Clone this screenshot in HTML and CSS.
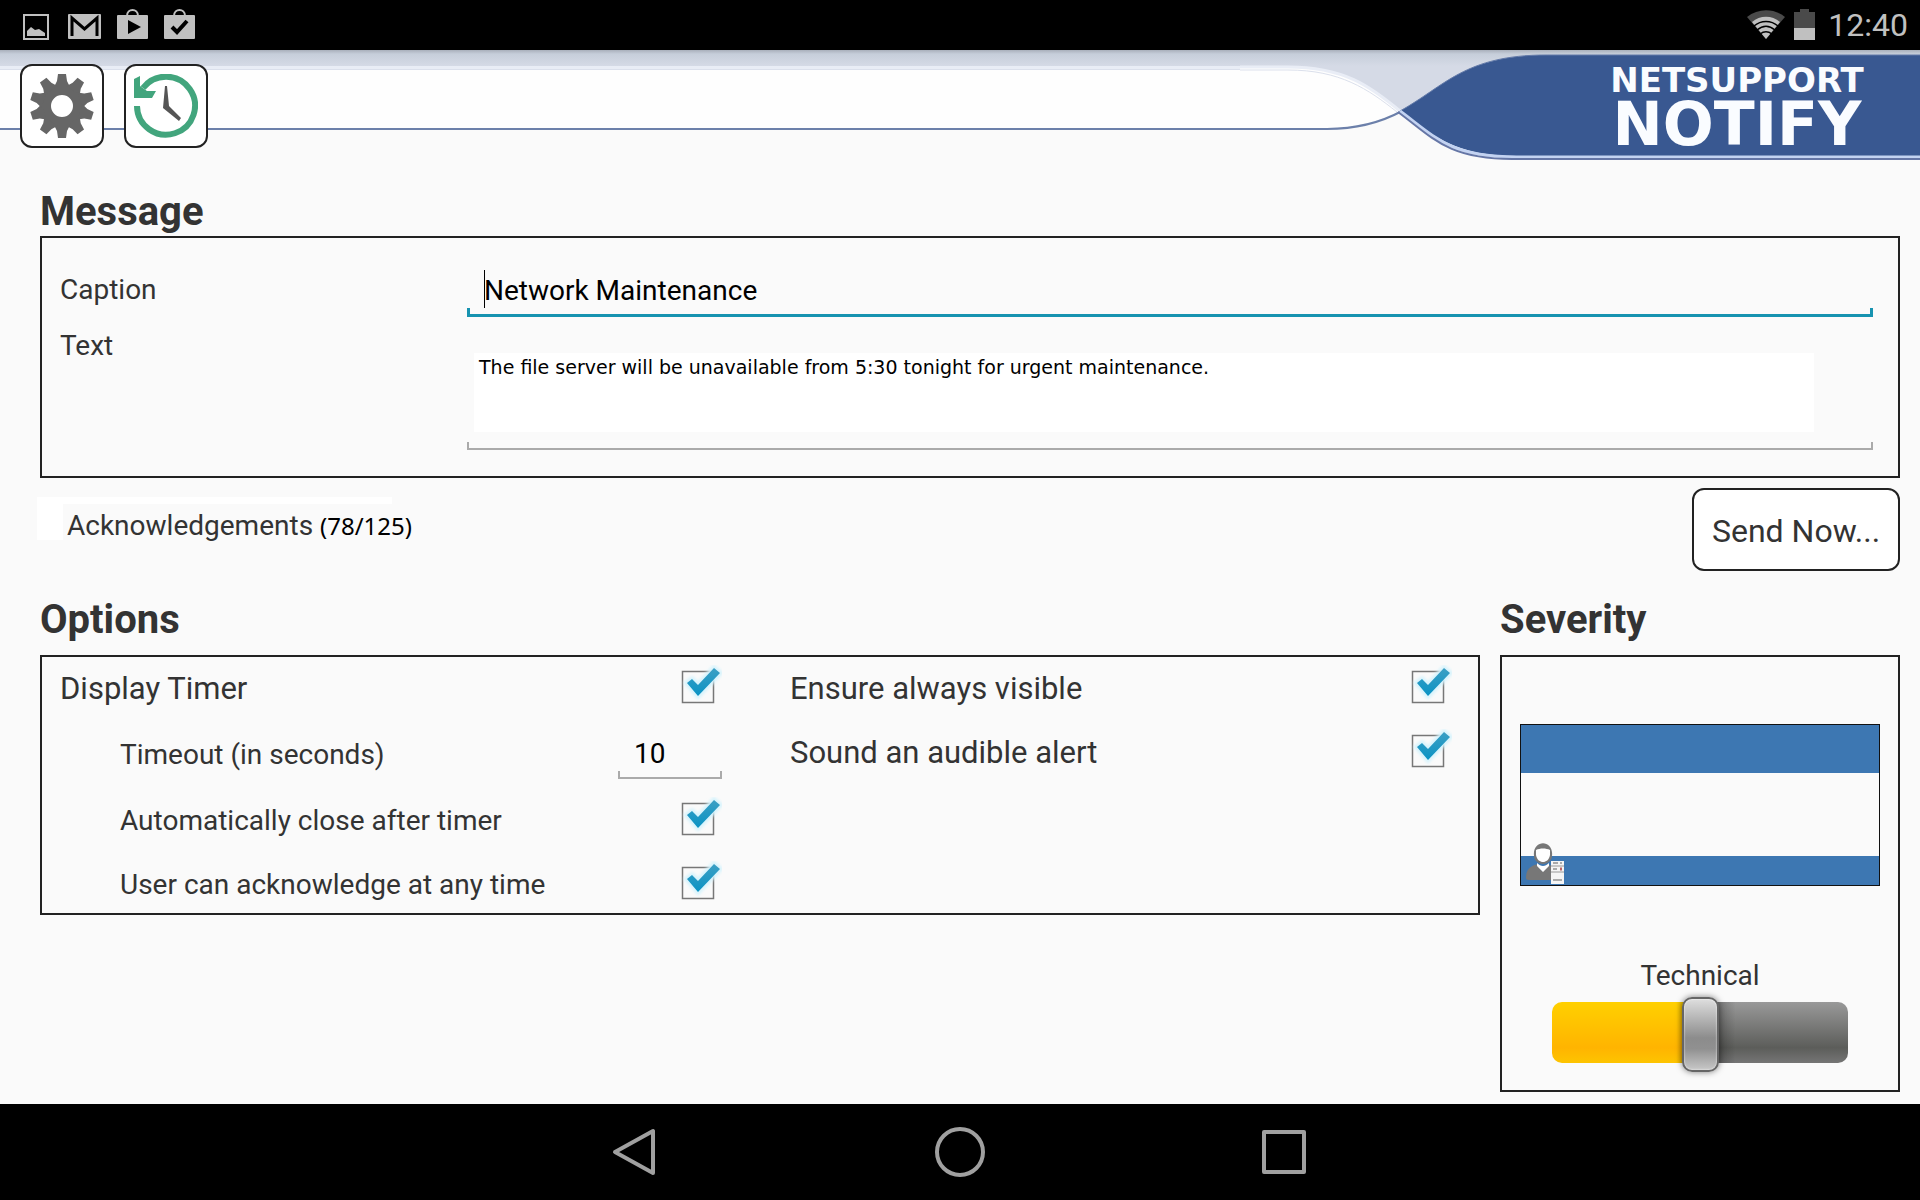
FILE: index.html
```html
<!DOCTYPE html>
<html lang="en">

<head>
    <meta charset="UTF-8">
    <meta name="viewport" content="width=device-width, initial-scale=1.0">
    <title>NetSupport Notify</title>
    <link rel="stylesheet" href="styles.css">
</head>

<body>
    <!-- Status Bar -->
    <div class="status-bar">
        <div class="status-left">
            <svg width="26" height="26" viewBox="0 0 26 26">
                <rect x="1" y="1" width="24" height="24" fill="none" stroke="#c0c0c0" stroke-width="2" />
                <path d="M4 22V17L8 13L12 16L16 15L22 19V22Z" fill="#c0c0c0" />
            </svg>
            <svg width="34" height="26" viewBox="0 0 34 26">
                <rect x="0" y="0" width="33" height="25" rx="1" fill="#c0c0c0" />
                <path d="M4 22V4L16.500 15L29 4V22" fill="none" stroke="#000" stroke-width="3" />
            </svg>
            <svg width="32" height="32" viewBox="0 0 32 32">
                <path d="M10 8C10 0 21 0 21 8" fill="none" stroke="#c0c0c0" stroke-width="2" />
                <rect x="0" y="7" width="31" height="24" rx="1" fill="#c0c0c0" />
                <path d="M11 12L24 19L11 26Z" fill="#000" />
            </svg>
            <svg width="32" height="32" viewBox="0 0 32 32">
                <path d="M10 8C10 0 21 0 21 8" fill="none" stroke="#c0c0c0" stroke-width="2" />
                <rect x="0" y="7" width="31" height="24" rx="1" fill="#c0c0c0" />
                <path d="M8 19L13 24L23 13" fill="none" stroke="#000" stroke-width="4" />
            </svg>
        </div>
        <div class="status-right">
            <svg width="38" height="30" viewBox="0 0 38 30">
                <path d="M19 29L0 7C11 -2 27 -2 38 7Z" fill="#4a4a4a" />
                <path d="M19 29L5 12C13 5 25 5 33 12Z" fill="#c0c0c0" />
                <path d="M7 16C14 10 24 10 31 16M10 20C16 15 22 15 28 20M13 24C17 21 21 21 25 24" fill="none" stroke="#000" stroke-width="1.500" />
            </svg>
            <svg width="22" height="32" viewBox="0 0 22 32">
                <path d="M6 0H15V3H21V19H0V3H6Z" fill="#4a4a4a" />
                <rect x="0" y="19" width="21" height="12" fill="#c0c0c0" />
            </svg>
            <span class="clock">12:40</span>
        </div>
    </div>

    <!-- Header -->
    <header class="header">
        <svg class="swoosh" width="680" height="110" viewBox="0 0 680 110">
            <defs>
                <linearGradient id="band" gradientUnits="userSpaceOnUse" x1="0" y1="0" x2="0" y2="16">
                    <stop offset="0" stop-color="#a9b0bb" />
                    <stop offset="0.250" stop-color="#c6ceda" />
                    <stop offset="1" stop-color="#d5dae6" />
                </linearGradient>
            </defs>
            <rect width="680" height="110" fill="#fafafa" />
            <path d="M0 0H680V40H220L160 62L100 40H0Z" fill="url(#band)" />
            <path d="M0 17H48C104 17 130 36 160 61C138 74 115 79 87 79H0Z" fill="#fefefe" />
            <path d="M0 17H48C104 17 130 36 160 61" fill="none" stroke="#e9edf6" stroke-width="3" />
            <path d="M0 20H48C100 20 128 39 157 62" fill="none" stroke="#dbe0ec" stroke-width="1" />
            <path d="M0 79H87C115 79 138 74 162 61" fill="none" stroke="#6c80aa" stroke-width="2" />
            <path d="M160 61C205 36 225 5 306 5H680V106H278C215 106 195 87 160 61Z" fill="#395891" />
            <path d="M160 61C205 36 225 5 306 5H680" fill="none" stroke="#6279a8" stroke-width="1" />
            <path d="M160 61C195 87 210 107 276 107H680" fill="none" stroke="#c3d3f2" stroke-width="3" />
            <path d="M158 62C193 88 208 109 272 109H680" fill="none" stroke="#6576a6" stroke-width="2" />
        </svg>
        <div class="toolbar">
            <button class="icon-btn" aria-label="Settings">
                <svg width="64" height="64" viewBox="-32 -32 64 64" fill="#666">
                    <defs>
                        <path id="tooth" d="M-4 -32H4L5 -25L8 -19H-8L-5 -25Z" />
                    </defs>
                    <circle r="16.500" fill="none" stroke="#666" stroke-width="11" />
                    <use href="#tooth" />
                    <use href="#tooth" transform="rotate(36)" />
                    <use href="#tooth" transform="rotate(72)" />
                    <use href="#tooth" transform="rotate(108)" />
                    <use href="#tooth" transform="rotate(144)" />
                    <use href="#tooth" transform="rotate(180)" />
                    <use href="#tooth" transform="rotate(216)" />
                    <use href="#tooth" transform="rotate(252)" />
                    <use href="#tooth" transform="rotate(288)" />
                    <use href="#tooth" transform="rotate(324)" />
                </svg>
            </button>
            <button class="icon-btn" aria-label="History">
                <svg width="64" height="64" viewBox="0 0 64 64">
                    <path d="M3 32A29 29 0 1 0 9 14" fill="none" stroke="#42a57d" stroke-width="6" />
                    <path d="M0 24V5L6 2V12L13 17H22L18 24Z" fill="#42a57d" />
                    <path d="M31 12H33L35 32L47 44L45 47L29 34Z" fill="#555" />
                </svg>
            </button>
        </div>
        <div class="logo">
            <span class="logo-top">NETSUPPORT</span>
            <span class="logo-name">NOTIFY</span>
        </div>
    </header>

    <main class="container">
        <!-- Message -->
        <h2 class="section-title">Message</h2>
        <div class="panel message-panel">
            <label class="field-label" for="caption">Caption</label>
            <input class="line-input caption-input" type="text" id="caption" value="Network Maintenance">
            <label class="field-label" for="text">Text</label>
            <div class="text-field">
                <textarea id="text">The file server will be unavailable from 5:30 tonight for urgent maintenance.</textarea>
            </div>
        </div>

        <div class="send-row">
            <div class="acknowledgements">Acknowledgements <span class="ack-count">(78/125)</span></div>
            <button class="send-btn">Send Now...</button>
        </div>

        <div class="columns">
            <!-- Options -->
            <section>
                <h2 class="section-title spaced">Options</h2>
                <div class="panel options-panel">
                    <div class="option-list">
                        <div class="option">
                            <label for="displayTimer">Display Timer</label>
                            <input type="checkbox" id="displayTimer" checked>
                        </div>
                        <div class="option sub tall">
                            <label for="timeout">Timeout (in seconds)</label>
                            <input class="line-input timeout-input" type="text" id="timeout" value="10">
                        </div>
                        <div class="option sub">
                            <label for="autoClose">Automatically close after timer</label>
                            <input type="checkbox" id="autoClose" checked>
                        </div>
                        <div class="option sub">
                            <label for="userAck">User can acknowledge at any time</label>
                            <input type="checkbox" id="userAck" checked>
                        </div>
                    </div>
                    <div class="option-list">
                        <div class="option">
                            <label for="alwaysVisible">Ensure always visible</label>
                            <input type="checkbox" id="alwaysVisible" checked>
                        </div>
                        <div class="option">
                            <label for="audibleAlert">Sound an audible alert</label>
                            <input type="checkbox" id="audibleAlert" checked>
                        </div>
                    </div>
                </div>
            </section>

            <!-- Severity -->
            <section>
                <h2 class="section-title spaced">Severity</h2>
                <div class="panel severity-panel">
                    <div class="preview">
                        <div class="preview-top"></div>
                        <div class="preview-bottom">
                            <svg class="technician" width="40" height="42" viewBox="0 0 40 42">
                                <path d="M1 36C1 27 5 24 13 22L17 29L22 22L27 24V38H6C3 38 1 38 1 36Z" fill="#777" />
                                <path d="M9 14C7 -3 29 -3 27 14C27 18 23 22 18 22C13 22 9 18 9 14Z" fill="#777" />
                                <path d="M11 8C15 6 21 6 25 8V13C24 18 21 20 18 20C15 20 12 18 11 13Z" fill="#fff" />
                                <path d="M12 21C16 25 20 25 24 21L24 24L18 30L12 24Z" fill="#fff" />
                                <rect x="26" y="19" width="13" height="23" fill="#f5f5f5" />
                                <path d="M26 24H39M26 30H39" stroke="#999" stroke-width="1" />
                                <path d="M28 21H33M35 21H37M28 27H32M28 38H37" stroke="#aaa" stroke-width="2" />
                                <path d="M35 27H37" stroke="#b66" stroke-width="3" />
                            </svg>
                        </div>
                    </div>
                    <label class="severity-label" for="severity">Technical</label>
                    <input type="range" id="severity" min="0" max="4" value="2">
                </div>
            </section>
        </div>
    </main>

    <!-- Navigation Bar -->
    <nav class="nav-bar">
        <button class="nav-btn" aria-label="Back">
            <svg width="50" height="50" viewBox="0 0 50 50">
                <path d="M42 4V46L4 25Z" />
            </svg>
        </button>
        <button class="nav-btn" aria-label="Home">
            <svg width="50" height="50" viewBox="0 0 50 50">
                <circle cx="25" cy="25" r="23" />
            </svg>
        </button>
        <button class="nav-btn" aria-label="Recent apps">
            <svg width="50" height="50" viewBox="0 0 50 50">
                <rect x="5" y="5" width="40" height="40" />
            </svg>
        </button>
    </nav>
</body>

</html>
```

FILE: styles.css
```css
/* General Styling */
* {
    box-sizing: border-box;
}

body {
    font-family: 'Roboto', sans-serif;
    font-size: 28px;
    line-height: 38px;
    background-color: #fafafa;
    color: #333;
    margin: 0;
    min-height: 100vh;
    display: flex;
    flex-direction: column;
}

button,
input,
textarea {
    font: inherit;
    color: inherit;
    margin: 0;
}

svg {
    display: block;
}

/* Status Bar */
.status-bar {
    background-color: #000;
    color: #c0c0c0;
    height: 50px;
    padding: 0 12px 0 23px;
    display: flex;
    justify-content: space-between;
    align-items: center;
}

.status-left {
    display: flex;
    align-items: flex-end;
    gap: 15px;
    height: 32px;
    padding-bottom: 1px;
}

.status-left svg:first-child {
    margin-right: 4px;
}

.status-right {
    display: flex;
    align-items: center;
    gap: 12px;
}

.status-right svg:first-child {
    margin-right: -3px;
}

.clock {
    font-size: 32px;
}

/* Header */
.header {
    position: relative;
    height: 110px;
    padding: 14px 36px 0 20px;
    display: flex;
    justify-content: space-between;
    align-items: flex-start;
    background: linear-gradient(#a9b0bb 0, #c6ceda 4px, #d5dae6 16px, #e9edf6 16px, #e9edf6 19px, #dbe0ec 19px, #dbe0ec 20px, #fefefe 20px, #fefefe 78px, #6c80aa 78px, #6c80aa 80px, #fafafa 80px);
}

.swoosh {
    position: absolute;
    top: 0;
    right: 0;
}

.toolbar {
    display: flex;
    gap: 20px;
}

.icon-btn {
    width: 84px;
    height: 84px;
    padding: 0;
    display: flex;
    justify-content: center;
    align-items: center;
    background-color: #fff;
    border: 2px solid #222;
    border-radius: 12px;
    cursor: pointer;
    position: relative;
}

.logo {
    position: relative;
    width: 294px;
    color: #fafcff;
    font-family: 'DejaVu Sans', sans-serif;
    font-weight: bold;
    display: flex;
    flex-direction: column;
    align-items: center;
}

.logo-top {
    font-size: 34px;
    line-height: 32px;
}

.logo-name {
    font-size: 60px;
    line-height: 56px;
}

/* Panels */
.container {
    flex: 1;
    padding: 28px 20px 12px 40px;
}

.section-title {
    font-size: 40px;
    line-height: 48px;
    font-weight: bold;
    margin: 0;
}

.section-title.spaced {
    margin-bottom: 11px;
}

.panel {
    border: 2px solid #222;
}

/* Message */
.message-panel {
    display: grid;
    grid-template-columns: 407px 1fr;
    padding: 23px 25px 26px 18px;
}

.field-label {
    padding-top: 10px;
}

/* Underlined box with a short tick at each end */
.line-input {
    border: none;
    outline: none;
    color: #000;
    background: linear-gradient(#aaa, #aaa) left bottom / 2px 8px no-repeat,
        linear-gradient(#aaa, #aaa) right bottom / 2px 8px no-repeat,
        linear-gradient(#aaa, #aaa) left bottom / 100% 2px no-repeat;
}

.caption-input {
    padding: 11px 17px 7px;
    /* The first layer is the text cursor */
    background: linear-gradient(#000, #000) 17px 9px / 1px 38px no-repeat,
        linear-gradient(#1793b0, #1793b0) left bottom / 3px 9px no-repeat,
        linear-gradient(#1793b0, #1793b0) right bottom / 3px 9px no-repeat,
        linear-gradient(#1793b0, #1793b0) left bottom / 100% 3px no-repeat;
}

.text-field {
    padding: 36px 59px 18px 7px;
    background: linear-gradient(#aaa, #aaa) left bottom / 2px 8px no-repeat,
        linear-gradient(#aaa, #aaa) right bottom / 2px 8px no-repeat,
        linear-gradient(#aaa, #aaa) left bottom / 100% 2px no-repeat;
}

.text-field textarea {
    display: block;
    width: 100%;
    height: 79px;
    padding: 2px 5px;
    border: none;
    outline: none;
    resize: none;
    background-color: #fff;
    color: #000;
    font-family: 'DejaVu Sans', sans-serif;
    font-size: 19px;
    line-height: 24px;
}

/* Send Row */
.send-row {
    display: flex;
    justify-content: space-between;
    align-items: flex-start;
    margin: 10px 0 25px;
}

.acknowledgements {
    margin: 9px 0 0 -3px;
    padding: 10px 0 0 30px;
    background: linear-gradient(#fff, #fff) left top / 355px 7px no-repeat,
        linear-gradient(#fff, #fff) left top / 26px 43px no-repeat;
}

.ack-count {
    color: #000;
    font-family: 'Noto Sans', sans-serif;
    font-size: 24px;
}

.send-btn {
    width: 208px;
    height: 83px;
    padding: 3px 0 0;
    font-size: 32px;
    background-color: #fff;
    border: 2px solid #222;
    border-radius: 12px;
    cursor: pointer;
}

.columns {
    display: grid;
    grid-template-columns: 1fr 400px;
    gap: 20px;
}

/* Options */
.options-panel {
    display: grid;
    grid-template-columns: 1fr 1fr;
    gap: 68px;
    padding: 0 26px 0 18px;
}

.option-list {
    display: flex;
    flex-direction: column;
    gap: 4px;
}

.option {
    height: 60px;
    display: flex;
    justify-content: space-between;
    align-items: center;
    font-size: 31px;
}

.option label {
    padding-top: 3px;
}

.option.sub {
    padding-left: 60px;
    font-size: 28px;
}

.option.tall {
    height: 64px;
}

.timeout-input {
    width: 104px;
    padding: 8px 16px 6px;
}

input[type="checkbox"] {
    appearance: none;
    width: 44px;
    height: 44px;
    cursor: pointer;
    background: url("data:image/svg+xml,%3Csvg xmlns='http://www.w3.org/2000/svg' viewBox='0 0 44 44'%3E%3Crect x='4.500' y='6.500' width='31' height='31' fill='none' stroke='%23777'/%3E%3C/svg%3E");
}

input[type="checkbox"]:checked {
    background: url("data:image/svg+xml,%3Csvg xmlns='http://www.w3.org/2000/svg' viewBox='0 0 44 44'%3E%3Cdefs%3E%3ClinearGradient id='g' x1='0' y1='0' x2='0' y2='1'%3E%3Cstop offset='0' stop-color='%233c9fc4'/%3E%3Cstop offset='1' stop-color='%230a93c4'/%3E%3C/linearGradient%3E%3Cfilter id='b' x='-30%25' y='-30%25' width='160%25' height='160%25'%3E%3CfeGaussianBlur stdDeviation='1.500'/%3E%3C/filter%3E%3C/defs%3E%3Crect x='4.500' y='6.500' width='31' height='31' fill='none' stroke='%23777' stroke-width='1.500'/%3E%3Cpath d='M9 18L14 14L20 20L36 3L42 8L20 31Z' fill='%23c5edfa' stroke='%23d5f3fc' stroke-width='5' filter='url(%23b)'/%3E%3Cpath d='M9 18L14 14L20 20L36 3L42 8L20 31Z' fill='url(%23g)'/%3E%3C/svg%3E");
}

/* Severity */
.severity-panel {
    display: flex;
    flex-direction: column;
    align-items: center;
    padding: 67px 18px 27px;
}

.preview {
    width: 100%;
    height: 162px;
    border: 1px solid #111;
    display: flex;
    flex-direction: column;
    justify-content: space-between;
    margin-bottom: 71px;
}

.preview-top {
    height: 48px;
    background-color: #3d77b2;
}

.preview-bottom {
    position: relative;
    height: 29px;
    background-color: #3d77b2;
}

.technician {
    position: absolute;
    left: 4px;
    bottom: 1px;
}

.severity-label {
    margin-bottom: 7px;
}

input[type="range"] {
    appearance: none;
    width: 296px;
    height: 61px;
    background: none;
    cursor: pointer;
}

input[type="range"]::-webkit-slider-runnable-track {
    height: 61px;
    border-radius: 10px;
    background: linear-gradient(90deg, transparent 42%, rgba(0, 0, 0, 0.3) 48%, rgba(0, 0, 0, 0.3) 54%, transparent 62%),
        linear-gradient(#ffd000, #ffb400 75%, #fdc400) left / 50% 100% no-repeat,
        linear-gradient(#999, #5c5d5a 75%, #757575);
}

input[type="range"]::-webkit-slider-thumb {
    appearance: none;
    width: 37px;
    height: 75px;
    margin-top: -5px;
    border: 2px solid #666;
    border-radius: 10px;
    background: linear-gradient(#dedede, #8c8c8c 55%, #909090 70%, #c8c8c8);
    box-shadow: 0 0 6px rgba(0, 0, 0, 0.5), inset 0 0 2px #fff;
}

/* Navigation Bar */
.nav-bar {
    display: flex;
    justify-content: center;
    height: 96px;
    background-color: #000;
}

.nav-btn {
    width: 324px;
    padding: 0;
    display: flex;
    justify-content: center;
    align-items: center;
    background: none;
    border: none;
    cursor: pointer;
}

.nav-btn svg {
    fill: none;
    stroke: #a0a0a0;
    stroke-width: 4px;
    stroke-linejoin: round;
}
```
